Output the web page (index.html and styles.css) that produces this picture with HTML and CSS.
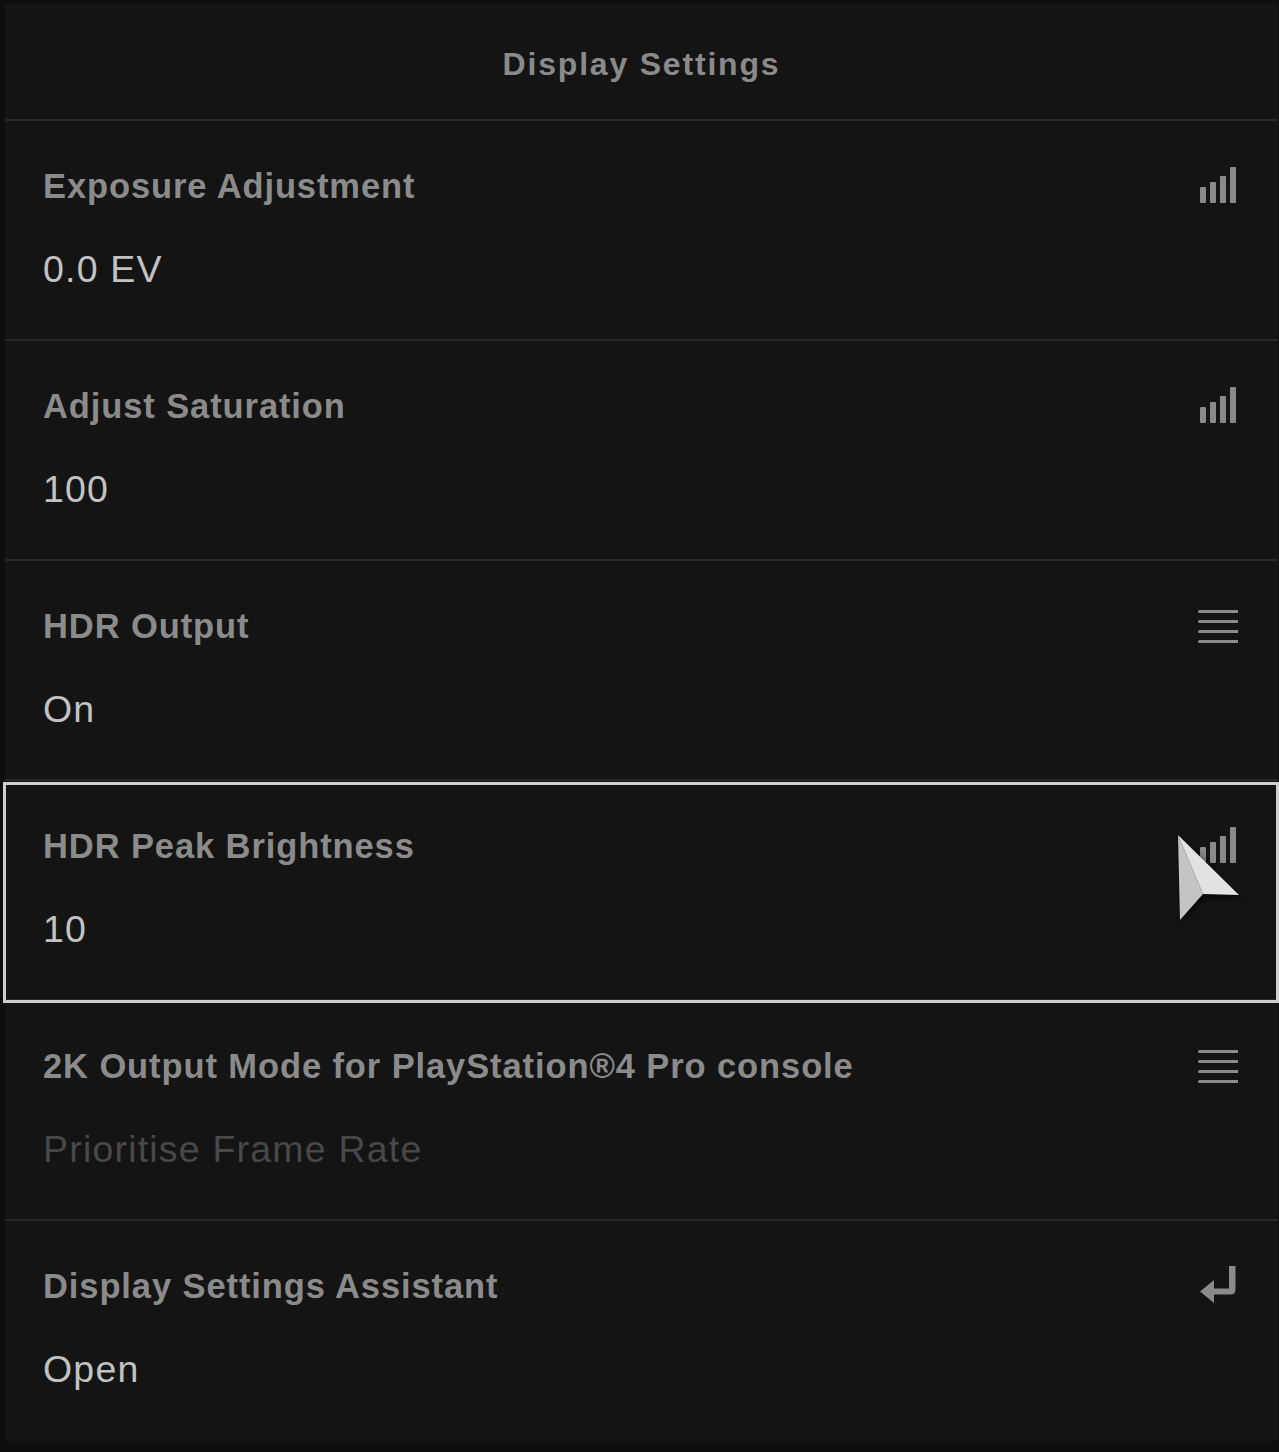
FILE: index.html
```html
<!DOCTYPE html>
<html lang="en">
<head>
<meta charset="utf-8">
<title>Display Settings</title>
<link rel="stylesheet" href="styles.css">
</head>
<body>
<div class="panel">
  <header class="panel-header">
    <h1 class="panel-title">Display Settings</h1>
  </header>

  <div class="setting">
    <div class="setting-head">
      <span class="setting-label">Exposure Adjustment</span>
      <svg class="setting-icon" viewBox="0 0 40 40" aria-hidden="true">
        <rect x="2" y="21" width="6" height="16" rx="1"/>
        <rect x="12" y="16" width="6" height="21" rx="1"/>
        <rect x="22" y="10" width="6" height="27" rx="1"/>
        <rect x="32" y="1" width="6" height="36" rx="1"/>
      </svg>
    </div>
    <div class="setting-value">0.0 EV</div>
  </div>

  <div class="setting">
    <div class="setting-head">
      <span class="setting-label">Adjust Saturation</span>
      <svg class="setting-icon" viewBox="0 0 40 40" aria-hidden="true">
        <rect x="2" y="21" width="6" height="16" rx="1"/>
        <rect x="12" y="16" width="6" height="21" rx="1"/>
        <rect x="22" y="10" width="6" height="27" rx="1"/>
        <rect x="32" y="1" width="6" height="36" rx="1"/>
      </svg>
    </div>
    <div class="setting-value">100</div>
  </div>

  <div class="setting">
    <div class="setting-head">
      <span class="setting-label">HDR Output</span>
      <svg class="setting-icon" viewBox="0 0 40 40" aria-hidden="true">
        <rect x="0" y="4" width="41" height="3" rx="1.5"/>
        <rect x="0" y="14" width="41" height="3" rx="1.5"/>
        <rect x="0" y="24" width="41" height="3" rx="1.5"/>
        <rect x="0" y="34" width="41" height="3" rx="1.5"/>
      </svg>
    </div>
    <div class="setting-value">On</div>
  </div>

  <div class="setting is-selected">
    <div class="setting-head">
      <span class="setting-label">HDR Peak Brightness</span>
      <svg class="setting-icon" viewBox="0 0 40 40" aria-hidden="true">
        <rect x="2" y="21" width="6" height="16" rx="1"/>
        <rect x="12" y="16" width="6" height="21" rx="1"/>
        <rect x="22" y="10" width="6" height="27" rx="1"/>
        <rect x="32" y="1" width="6" height="36" rx="1"/>
      </svg>
    </div>
    <div class="setting-value">10</div>
    <svg class="pointer" viewBox="0 0 70 96" aria-hidden="true">
      <polygon class="pointer-left" points="2,3 27,62 4,88"/>
      <polygon class="pointer-right" points="2,3 63,63 27,62"/>
    </svg>
  </div>

  <div class="setting">
    <div class="setting-head">
      <span class="setting-label">2K Output Mode for PlayStation®4 Pro console</span>
      <svg class="setting-icon" viewBox="0 0 40 40" aria-hidden="true">
        <rect x="0" y="4" width="41" height="3" rx="1.5"/>
        <rect x="0" y="14" width="41" height="3" rx="1.5"/>
        <rect x="0" y="24" width="41" height="3" rx="1.5"/>
        <rect x="0" y="34" width="41" height="3" rx="1.5"/>
      </svg>
    </div>
    <div class="setting-value is-disabled">Prioritise Frame Rate</div>
  </div>

  <div class="setting">
    <div class="setting-head">
      <span class="setting-label">Display Settings Assistant</span>
      <svg class="setting-icon" viewBox="0 0 40 40" aria-hidden="true">
        <path d="M31 0 H37.5 V23.5 Q37.5 28.5 32.5 28.5 H16 V37 L2 25.5 L16 14 V22.5 H31 Z"/>
      </svg>
    </div>
    <div class="setting-value">Open</div>
  </div>
</div>
</body>
</html>
```

FILE: styles.css
```css
html, body {
  margin: 0;
  padding: 0;
}

body {
  background: #0e0e0e;
  font-family: "Liberation Sans", Arial, Helvetica, sans-serif;
  width: 1279px;
  height: 1452px;
  overflow: hidden;
}

.panel {
  margin: 3px 1px 0 5px;
  height: 1438px;
  background: #141414;
  display: flex;
  flex-direction: column;
}

.panel-header {
  height: 116px;
  box-sizing: border-box;
  padding-top: 43px;
  text-align: center;
}

.panel-title {
  margin: 0;
  font-size: 32px;
  line-height: 36px;
  font-weight: 700;
  letter-spacing: 1.8px;
  color: #8a8a8a;
}

.setting {
  position: relative;
  height: 220px;
  box-sizing: border-box;
  border-top: 2px solid #282828;
  padding: 45px 40px 0 38px;
  display: flex;
  flex-direction: column;
  gap: 41px;
}

.setting-head {
  display: flex;
  justify-content: space-between;
  align-items: flex-start;
  height: 40px;
}

.setting-label {
  font-size: 34.5px;
  line-height: 40px;
  font-weight: 700;
  letter-spacing: 0.9px;
  color: #8b8b8b;
  white-space: nowrap;
}

.setting-icon {
  width: 40px;
  height: 40px;
  fill: #8a8a8a;
  flex: none;
}

.setting-value {
  font-size: 37.5px;
  line-height: 44px;
  letter-spacing: 1.2px;
  color: #c2c2c2;
}

.setting-value.is-disabled {
  color: #484848;
}

/* highlight frame around the focused row */
.setting.is-selected::after {
  content: "";
  position: absolute;
  top: 1px;
  left: -2px;
  right: -1px;
  bottom: -4px;
  border: 3px solid #cfcfcf;
  pointer-events: none;
  z-index: 2;
}

/* on-screen pointer hovering the focused row */
.pointer {
  position: absolute;
  left: 1171px;
  top: 51px;
  width: 70px;
  height: 96px;
  z-index: 3;
  filter: drop-shadow(2px 3px 3px rgba(0, 0, 0, 0.7));
}

.pointer-left {
  fill: #c4c4c4;
}

.pointer-right {
  fill: #e2e2e2;
}
```
